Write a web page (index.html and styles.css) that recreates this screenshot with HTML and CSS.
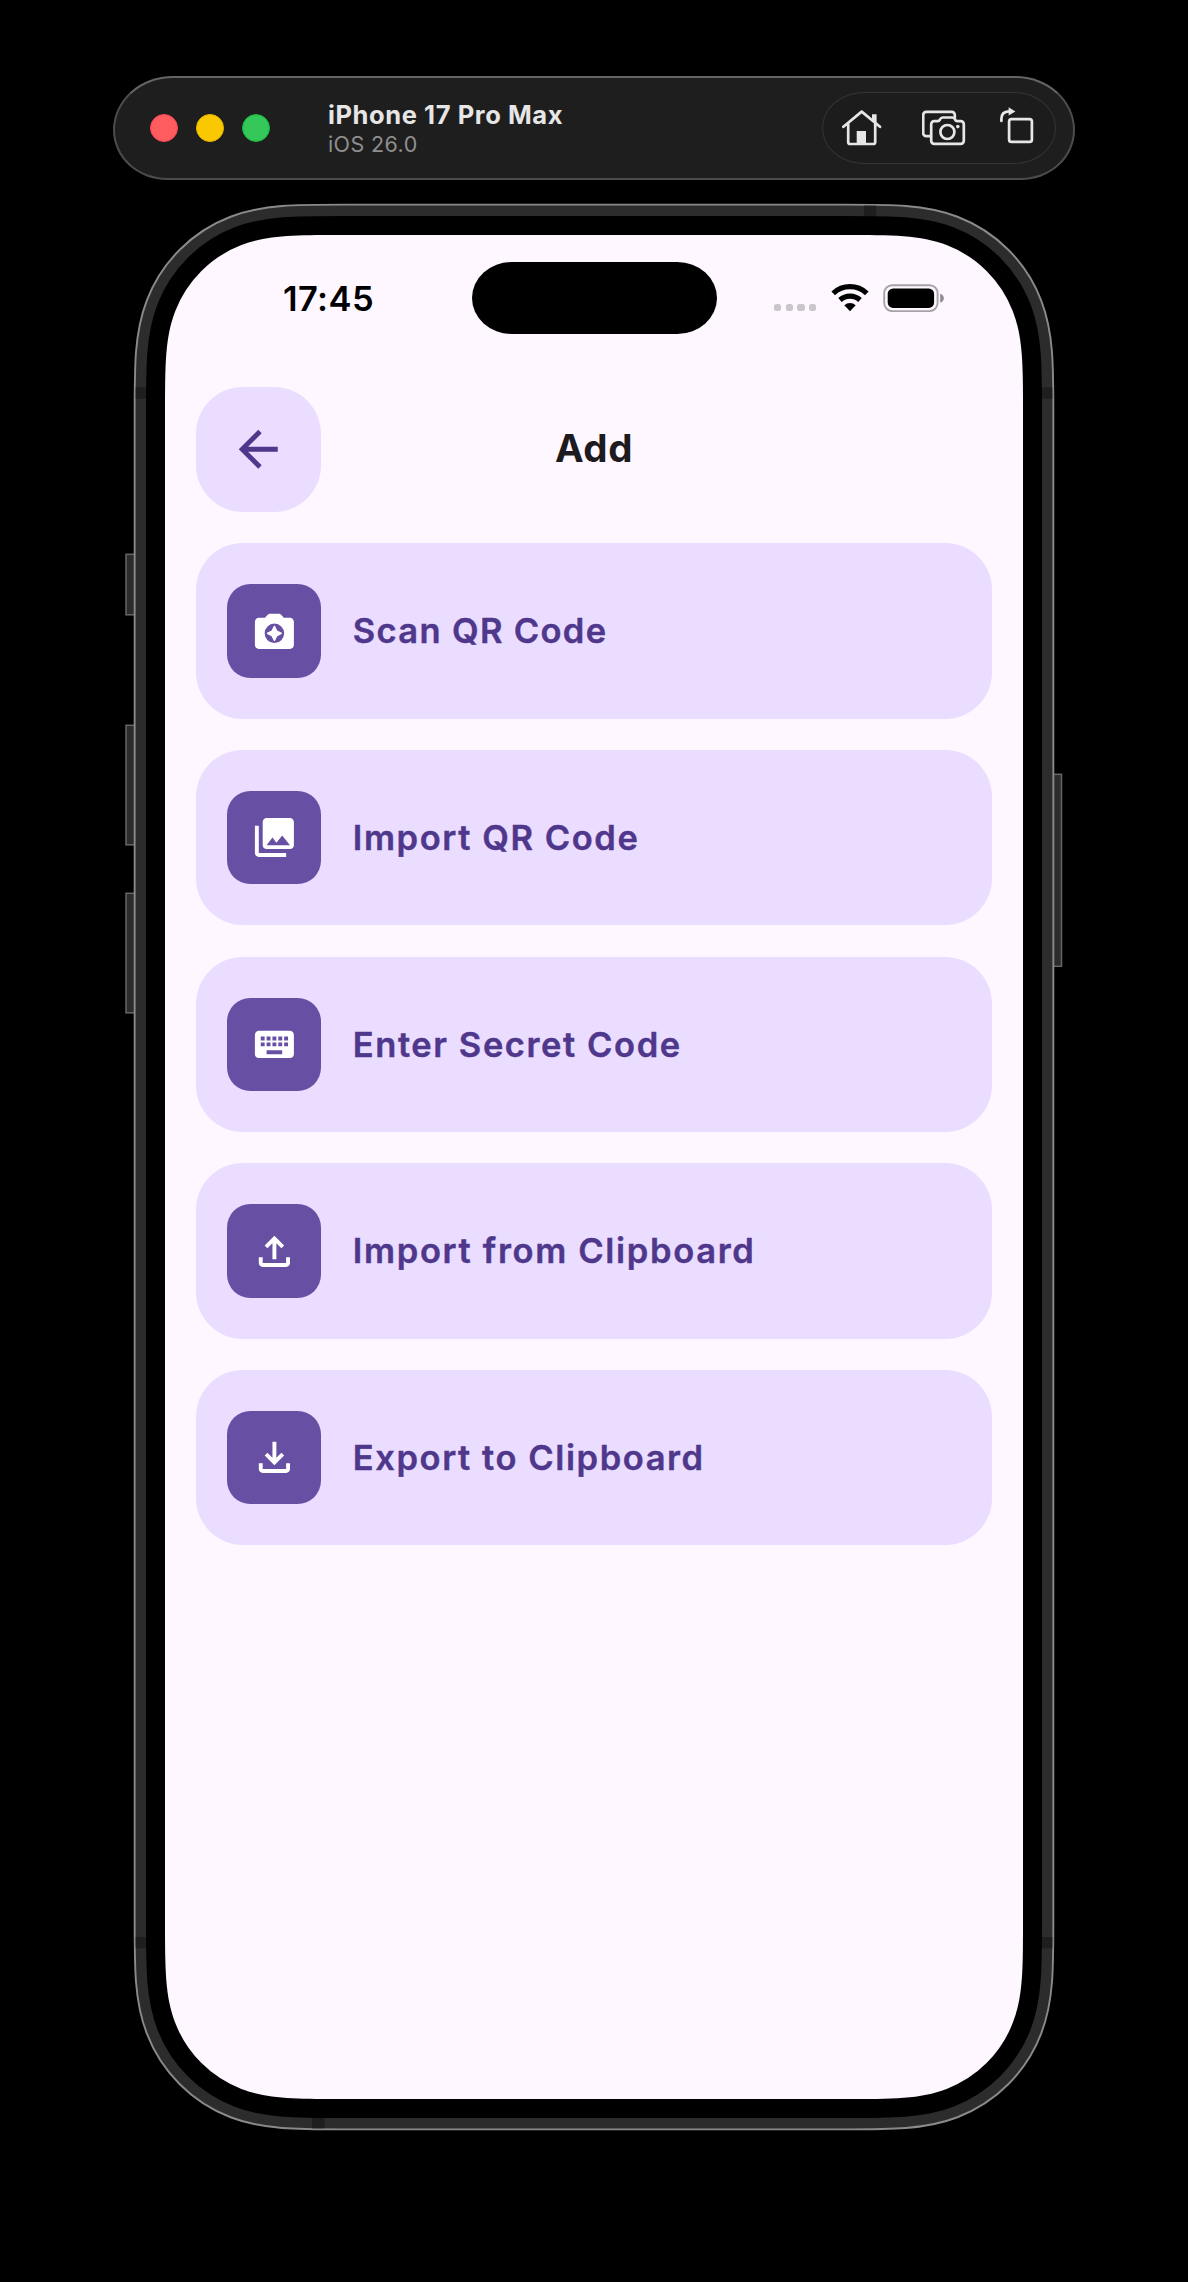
FILE: index.html
```
<!DOCTYPE html>
<html lang="en">
<head>
<meta charset="utf-8">
<title>Add</title>
<link rel="stylesheet" href="styles.css">
</head>
<body>
<header class="toolbar">
  <div class="lights">
    <span class="light light-close"></span>
    <span class="light light-min"></span>
    <span class="light light-max"></span>
  </div>
  <div class="device-name">
    <div class="name">iPhone 17 Pro Max</div>
    <div class="os">iOS 26.0</div>
  </div>
  <div class="tools">
    <svg class="tool" width="40" height="44" viewBox="0 0 40 44">
      <path class="solid" d="M30 8.2h4.6v10.3L30 14.6zM14.7 25H24v13h-9.3z"/>
      <path d="M1.4 20.8 19.7 5.6l18.3 15.2M6.2 18v18a2 2 0 0 0 2 2h23a2 2 0 0 0 2-2V18"/>
    </svg>
    <svg class="tool" width="44" height="44" viewBox="0 0 44 44">
      <path d="M8.4 30.2H4.2a3 3 0 0 1-3-3V8.9a3 3 0 0 1 3-3h25.6a3 3 0 0 1 3 3V12"/>
      <path d="M12.2 15.2h3.6c1 0 1.6-.6 2.2-1.7.6-1.2 1.5-2 2.7-2h9.6c1.2 0 2.1.8 2.7 2 .6 1.1 1.2 1.7 2.2 1.7h3.6a3 3 0 0 1 3 3v16.6a3 3 0 0 1-3 3H12.2a3 3 0 0 1-3-3V18.2a3 3 0 0 1 3-3z"/>
      <circle cx="25.4" cy="26" r="7"/>
      <circle class="solid" cx="35.8" cy="20.6" r="1.8"/>
    </svg>
    <svg class="tool" width="34" height="44" viewBox="0 0 34 44">
      <rect x="9.1" y="13.1" width="22.8" height="22.8" rx="2.5"/>
      <path d="M1.4 15V13c0-4.6 2.6-7.5 7.5-7.6"/>
      <path class="solid" d="M8.6 1.2 15.4 5.4 8.6 9.6z"/>
    </svg>
  </div>
</header>

<main class="device">
  <svg class="frame" viewBox="0 0 858 1864">
    <defs>
      <path id="screen-shape" d="M180 0H678C728 0 755.2 0 781.6 10.1A115 115 0 0 1 847.9 76.4C858 102.8 858 130 858 180V1684C858 1734 858 1761.2 847.9 1787.6A115 115 0 0 1 781.6 1853.9C755.2 1864 728 1864 678 1864H180C130 1864 102.8 1864 76.4 1853.9A115 115 0 0 1 10.1 1787.6C0 1761.2 0 1734 0 1684V180C0 130 0 102.8 10.1 76.4A115 115 0 0 1 76.4 10.1C102.8 0 130 0 180 0Z"/>
    </defs>
    <g class="side-buttons">
      <rect x="-39" y="319.3" width="16" height="60.5"/>
      <rect x="-39" y="490.3" width="16" height="119.5"/>
      <rect x="-39" y="658.3" width="16" height="119.5"/>
      <rect x="880" y="539.3" width="16.5" height="192"/>
    </g>
    <use href="#screen-shape" class="rim"/>
    <use href="#screen-shape" class="metal"/>
    <g class="antennas">
      <rect x="699" y="-29.3" width="12.3" height="12"/>
      <rect x="147" y="1881" width="12.5" height="12.3"/>
      <rect x="-29.3" y="152.3" width="12" height="11.5"/>
      <rect x="875" y="152.3" width="12.3" height="11.5"/>
      <rect x="-29.3" y="1702" width="12" height="11.3"/>
      <rect x="875" y="1702" width="12.3" height="11.3"/>
    </g>
    <use href="#screen-shape" class="bezel"/>
    <use href="#screen-shape" class="glass"/>
  </svg>

  <div class="screen">
    <div class="status">
      <div class="time">17:45</div>
      <div class="island"></div>
      <div class="indicators">
        <div class="signal"><i></i><i></i><i></i><i></i></div>
        <svg class="wifi" width="38" height="28" viewBox="0 0 38 28">
          <path class="arc" d="M2.2 9.3a24.5 24.5 0 0 1 33.6 0M9 16a14.8 14.8 0 0 1 20 0"/>
          <path d="M13.3 21.3a8.3 8.3 0 0 1 11.4 0L19 27.2z"/>
        </svg>
        <svg class="battery" width="62" height="28" viewBox="0 0 62 28">
          <rect class="shell" x="1.2" y="1.2" width="53.4" height="25.9" rx="8"/>
          <rect x="4.7" y="4.4" width="46.4" height="19.5" rx="5.4"/>
          <path class="cap" d="M57.2 9.7c2.3.6 3.6 2.4 3.6 4.5s-1.3 3.9-3.6 4.5z"/>
        </svg>
      </div>
    </div>

    <div class="app-bar">
      <button class="back" aria-label="Back">
        <svg width="58.5" height="58.5" viewBox="0 0 24 24"><path d="M20 11H7.83l5.59-5.59L12 4l-8 8 8 8 1.41-1.41L7.83 13H20z"/></svg>
      </button>
      <h1 class="title">Add</h1>
    </div>

    <ul class="actions">
      <li class="action">
        <span class="tile"><svg viewBox="0 0 24 24"><path fill-rule="evenodd" d="M9.9 3c-.56 0-1.1.24-1.48.65L7.17 5H4c-1.1 0-2 .9-2 2v12c0 1.1.9 2 2 2h16c1.1 0 2-.9 2-2V7c0-1.1-.9-2-2-2h-3.17l-1.24-1.35C15.22 3.24 14.68 3 14.12 3zM12 18a5 5 0 1 1 0-10 5 5 0 0 1 0 10z"/><path d="M12 16.9c.3 0 .36-.2.45-.4l1-2.05 2.05-1c.2-.09.4-.15.4-.45s-.2-.36-.4-.45l-2.05-1-1-2.05c-.09-.2-.15-.4-.45-.4s-.36.2-.45.4l-1 2.05-2.05 1c-.2.09-.4.15-.4.45s.2.36.4.45l2.05 1 1 2.05c.09.2.15.4.45.4z"/></svg></span>
        <span class="label label-scan">Scan QR Code</span>
      </li>
      <li class="action">
        <span class="tile"><svg viewBox="0 0 24 24"><path d="M22 16V4c0-1.1-.9-2-2-2H8c-1.1 0-2 .9-2 2v12c0 1.1.9 2 2 2h12c1.1 0 2-.9 2-2zm-11-4l2.03 2.71L16 11l4 5H8l3-4zM2 6v14c0 1.1.9 2 2 2h14v-2H4V6H2z"/></svg></span>
        <span class="label">Import QR Code</span>
      </li>
      <li class="action">
        <span class="tile"><svg viewBox="0 0 24 24"><path d="M20 5H4c-1.1 0-1.99.9-1.99 2L2 17c0 1.1.9 2 2 2h16c1.1 0 2-.9 2-2V7c0-1.1-.9-2-2-2zm-9 3h2v2h-2V8zm0 3h2v2h-2v-2zM8 8h2v2H8V8zm0 3h2v2H8v-2zm-1 2H5v-2h2v2zm0-3H5V8h2v2zm9 7H8v-2h8v2zm0-4h-2v-2h2v2zm0-3h-2V8h2v2zm3 3h-2v-2h2v2zm0-3h-2V8h2v2z"/></svg></span>
        <span class="label">Enter Secret Code</span>
      </li>
      <li class="action">
        <span class="tile"><svg viewBox="0 0 24 24"><path d="M18 15v3H6v-3H4v3c0 1.1.9 2 2 2h12c1.1 0 2-.9 2-2v-3h-2zM7 9l1.41 1.41L11 7.83V16h2V7.83l2.59 2.58L17 9l-5-5-5 5z"/></svg></span>
        <span class="label label-import">Import from Clipboard</span>
      </li>
      <li class="action">
        <span class="tile"><svg viewBox="0 0 24 24"><path d="M18 15v3H6v-3H4v3c0 1.1.9 2 2 2h12c1.1 0 2-.9 2-2v-3h-2zm-1-4l-1.41-1.41L13 12.17V4h-2v8.17L8.41 9.59 7 11l5 5 5-5z"/></svg></span>
        <span class="label">Export to Clipboard</span>
      </li>
    </ul>
  </div>
</main>
</body>
</html>
```
FILE: styles.css
```
* { box-sizing: border-box; }

body {
  margin: 0;
  padding: 76px 0 0 113px;
  width: 1188px;
  height: 2282px;
  overflow: hidden;
  background: #000;
  font-family: Inter, "Liberation Sans", sans-serif;
}

/* Simulator window toolbar */
.toolbar {
  display: flex;
  align-items: center;
  width: 962px;
  height: 104px;
  padding: 0 17px 0 35px;
  border: 2px solid #4c4c4c;
  border-top-color: #646464;
  border-radius: 60px 60px 54px 54px / 54px 54px 50px 50px;
  background: #1e1e1e;
}

.lights { display: flex; gap: 18px; }
.light { width: 28px; height: 28px; border-radius: 50%; }
.light-close { background: #ff5c60; border: 1px solid #f5484d; }
.light-min { background: #fac800; border: 1px solid #e9b500; }
.light-max { background: #34c759; border: 1px solid #17b43a; }

.device-name { margin-left: 58px; padding-top: 2px; white-space: nowrap; }
.name {
  color: #e6e6e6;
  font-size: 25.5px;
  font-weight: 700;
  letter-spacing: 0.58px;
  line-height: 30px;
}
.os {
  color: #8e8e8e;
  font-size: 21.5px;
  letter-spacing: 0.4px;
  line-height: 29px;
}

.tools {
  display: flex;
  align-items: center;
  width: 234px;
  height: 72px;
  margin-left: auto;
  padding-left: 18.5px;
  border: 1.5px solid #353535;
  border-radius: 42px / 36px;
  background: #1c1c1c;
}
.tool { fill: none; stroke: #e6e6e6; stroke-width: 2.7; stroke-linejoin: round; stroke-linecap: round; }
.tool + .tool { margin-left: 40px; }
.tool + .tool + .tool { margin-left: 34px; }
.tool .solid { fill: #e6e6e6; stroke: none; }

/* Phone body */
.device {
  position: relative;
  width: 858px;
  height: 1864px;
  margin: 55px 0 0 52px;
}
.frame {
  position: absolute;
  inset: 0;
  width: 858px;
  height: 1864px;
  overflow: visible;
}
.frame use { fill: none; }
.frame .rim { stroke: #8a8a8a; stroke-width: 62.6; }
.frame .metal { stroke: #2c2c2c; stroke-width: 58.8; }
.frame .bezel { stroke: #000; stroke-width: 38; }
.frame .glass { fill: #fef7ff; }
.side-buttons { fill: #2c2c2c; stroke: #666; stroke-width: 1.5; }
.antennas { fill: #1e1e1e; }

.screen { position: relative; padding: 26.5px 31.2px 0; }

/* Status bar */
.status {
  display: grid;
  grid-template-columns: 1fr 245px 1fr;
  align-items: center;
  height: 72.5px;
  margin: 0 -31.2px;
}
.time {
  padding: 2px 0 0 118px;
  font-size: 34.5px;
  font-weight: 600;
  letter-spacing: 0.4px;
  line-height: 40px;
}
.island { height: 72.5px; border-radius: 40px / 36.2px; background: #000; }
.indicators { display: flex; align-items: center; padding-left: 57.5px; }
.signal { display: flex; gap: 4.4px; padding-top: 19px; }
.signal i { width: 7.3px; height: 7.3px; border-radius: 2.5px; background: #cbc5cc; }
.wifi { margin-left: 14.6px; }
.wifi .arc { fill: none; stroke: #000; stroke-width: 5.2; }
.battery { margin-left: 13.6px; }
.battery .shell { fill: none; stroke: #a7a2a8; stroke-width: 1.9; }
.battery .cap { fill: #8f8a90; }

/* App bar */
.app-bar {
  display: grid;
  grid-template-columns: 124.8px 1fr 124.8px;
  align-items: center;
  margin-top: 53.2px;
}
.back {
  display: grid;
  place-items: center;
  width: 124.8px;
  height: 124.8px;
  padding: 0;
  border: 0;
  border-radius: 46.8px;
  background: #eaddff;
}
.back path { fill: #4f378b; }
.title {
  margin: 0;
  padding: 0 0 3px;
  color: #1d1b20;
  font-size: 38.5px;
  font-weight: 700;
  letter-spacing: 0.6px;
  line-height: 48px;
  text-align: center;
}

/* Action list */
.actions {
  display: grid;
  gap: 31.2px;
  margin: 31.2px 0 0;
  padding: 0;
  list-style: none;
}
.action {
  display: flex;
  align-items: center;
  gap: 31.8px;
  height: 175.5px;
  padding: 0 31.2px;
  border-radius: 46.8px;
  background: #eaddff;
}
.tile {
  display: grid;
  place-items: center;
  width: 93.6px;
  height: 93.6px;
  border-radius: 23.4px;
  background: #6750a4;
}
.tile svg { width: 46.8px; height: 46.8px; fill: #fff; }
.label {
  padding-top: 1px;
  color: #4f378b;
  font-size: 34.5px;
  font-weight: 600;
  letter-spacing: 1.58px;
  line-height: 48px;
  white-space: nowrap;
  -webkit-text-stroke: 0.4px #4f378b;
}
.label-scan { letter-spacing: 1.33px; }
.label-import { letter-spacing: 1.67px; }
```
